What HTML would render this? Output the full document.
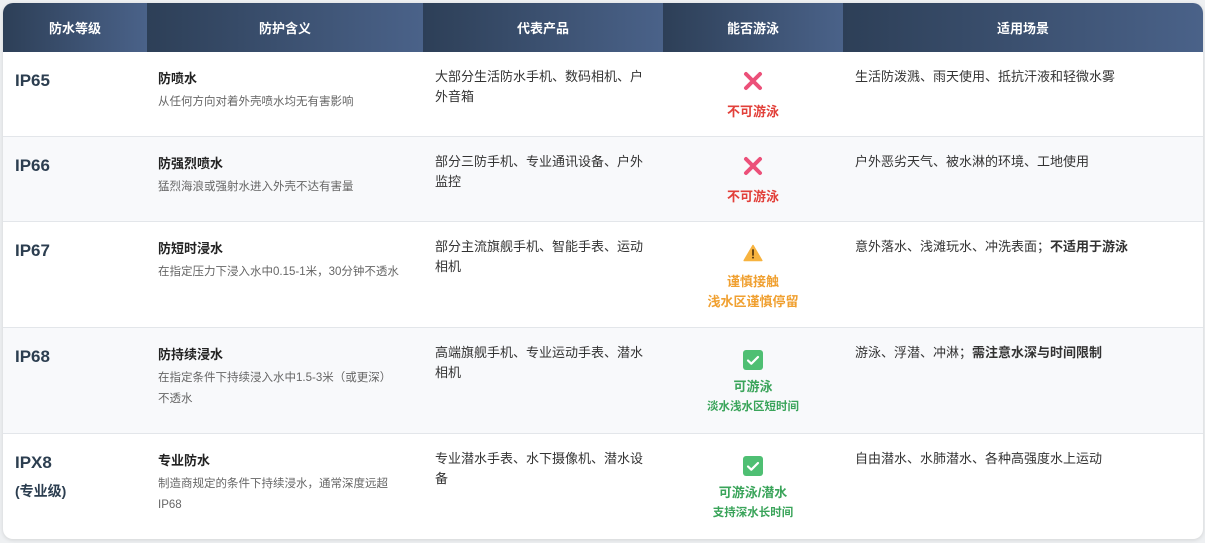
<!DOCTYPE html>
<html><head><meta charset="utf-8"><style>
*{margin:0;padding:0;box-sizing:border-box}
body{width:1205px;height:543px;background:#eef0f2;font-family:"Liberation Sans","Noto Sans CJK SC",sans-serif;position:relative;overflow:hidden}
.t{position:absolute;left:3px;top:3px;width:1200px;height:536px;background:#fff;border-radius:10px;overflow:hidden;box-shadow:0 1px 4px rgba(0,0,0,.12)}
.h{position:absolute;top:0;height:49px;color:#fff;font-weight:bold;font-size:13px;display:flex;align-items:center;justify-content:center;background:linear-gradient(90deg,#2d3f57,#4a6289)}
.r{position:absolute;left:0;width:1200px;border-bottom:1px solid #e3e6ea}
.r.g{background:#f8f9fb}
.c{position:absolute;top:0;font-size:13px;color:#333;line-height:20px}
.ip{left:12px;top:18px;font-size:17px;font-weight:bold;color:#2c3e50;line-height:22px}
.m{left:155px;top:17px}
.m b{display:block;font-size:13px;color:#222;margin-bottom:2px}
.m span{font-size:11.5px;color:#666;line-height:20px}
.p{left:432px;top:15px;width:212px}
.s{left:660px;width:180px;text-align:center;top:18px;font-weight:bold;font-size:13px}
.u{left:852px;top:15px;width:340px}
.ico{display:block;margin:0 auto}
</style></head><body>
<div class="t">
<div class="h" style="left:0;width:144px">防水等级</div>
<div class="h" style="left:144px;width:276px">防护含义</div>
<div class="h" style="left:420px;width:240px">代表产品</div>
<div class="h" style="left:660px;width:180px">能否游泳</div>
<div class="h" style="left:840px;width:360px">适用场景</div>

<div class="r" style="top:49px;height:85px">
<div class="c ip">IP65</div>
<div class="c m"><b>防喷水</b><span>从任何方向对着外壳喷水均无有害影响</span></div>
<div class="c p">大部分生活防水手机、数码相机、户外音箱</div>
<div class="c s" style="color:#e2403a"><svg class="ico" width="22" height="22" viewBox="0 0 22 22"><path d="M4 4L18 18M18 4L4 18" stroke="#ec5079" stroke-width="4" stroke-linecap="round"/></svg><div style="margin-top:10px">不可游泳</div></div>
<div class="c u">生活防泼溅、雨天使用、抵抗汗液和轻微水雾</div>
</div>

<div class="r g" style="top:134px;height:85px">
<div class="c ip">IP66</div>
<div class="c m"><b>防强烈喷水</b><span>猛烈海浪或强射水进入外壳不达有害量</span></div>
<div class="c p">部分三防手机、专业通讯设备、户外监控</div>
<div class="c s" style="color:#e2403a"><svg class="ico" width="22" height="22" viewBox="0 0 22 22"><path d="M4 4L18 18M18 4L4 18" stroke="#ec5079" stroke-width="4" stroke-linecap="round"/></svg><div style="margin-top:10px">不可游泳</div></div>
<div class="c u">户外恶劣天气、被水淋的环境、工地使用</div>
</div>

<div class="r" style="top:219px;height:106px">
<div class="c ip">IP67</div>
<div class="c m"><b>防短时浸水</b><span>在指定压力下浸入水中0.15-1米，30分钟不透水</span></div>
<div class="c p">部分主流旗舰手机、智能手表、运动相机</div>
<div class="c s" style="color:#f0a030;top:22px"><svg class="ico" width="20" height="18" viewBox="0 0 20 18"><path d="M10 1.5L18.8 16.5H1.2Z" fill="#f7b33f" stroke="#f7b33f" stroke-width="1.5" stroke-linejoin="round"/><path d="M10 6v5" stroke="#5a3a10" stroke-width="1.8" stroke-linecap="round"/><circle cx="10" cy="13.6" r="1" fill="#5a3a10"/></svg><div style="margin-top:10px;line-height:20px">谨慎接触<br>浅水区谨慎停留</div></div>
<div class="c u">意外落水、浅滩玩水、冲洗表面；<b>不适用于游泳</b></div>
</div>

<div class="r g" style="top:325px;height:106px">
<div class="c ip">IP68</div>
<div class="c m"><b>防持续浸水</b><span>在指定条件下持续浸入水中1.5-3米（或更深）<br>不透水</span></div>
<div class="c p">高端旗舰手机、专业运动手表、潜水相机</div>
<div class="c s" style="color:#3aa45a;top:22px"><svg class="ico" width="20" height="20" viewBox="0 0 20 20"><rect width="20" height="20" rx="3" fill="#4fbf73"/><path d="M5 10.5l3.3 3.2L15 7" stroke="#fff" stroke-width="2.2" fill="none" stroke-linecap="round" stroke-linejoin="round"/></svg><div style="line-height:20px;margin-top:7px">可游泳</div><div style="font-size:11.5px;line-height:20px">淡水浅水区短时间</div></div>
<div class="c u">游泳、浮潜、冲淋；<b>需注意水深与时间限制</b></div>
</div>

<div class="r" style="top:431px;height:106px;border:none">
<div class="c ip">IPX8<div style="font-size:14px;margin-top:6px">(专业级)</div></div>
<div class="c m"><b>专业防水</b><span>制造商规定的条件下持续浸水，通常深度远超<br>IP68</span></div>
<div class="c p">专业潜水手表、水下摄像机、潜水设备</div>
<div class="c s" style="color:#3aa45a;top:22px"><svg class="ico" width="20" height="20" viewBox="0 0 20 20"><rect width="20" height="20" rx="3" fill="#4fbf73"/><path d="M5 10.5l3.3 3.2L15 7" stroke="#fff" stroke-width="2.2" fill="none" stroke-linecap="round" stroke-linejoin="round"/></svg><div style="line-height:20px;margin-top:7px">可游泳/潜水</div><div style="font-size:11.5px;line-height:20px">支持深水长时间</div></div>
<div class="c u">自由潜水、水肺潜水、各种高强度水上运动</div>
</div>
</div>
</body></html>
